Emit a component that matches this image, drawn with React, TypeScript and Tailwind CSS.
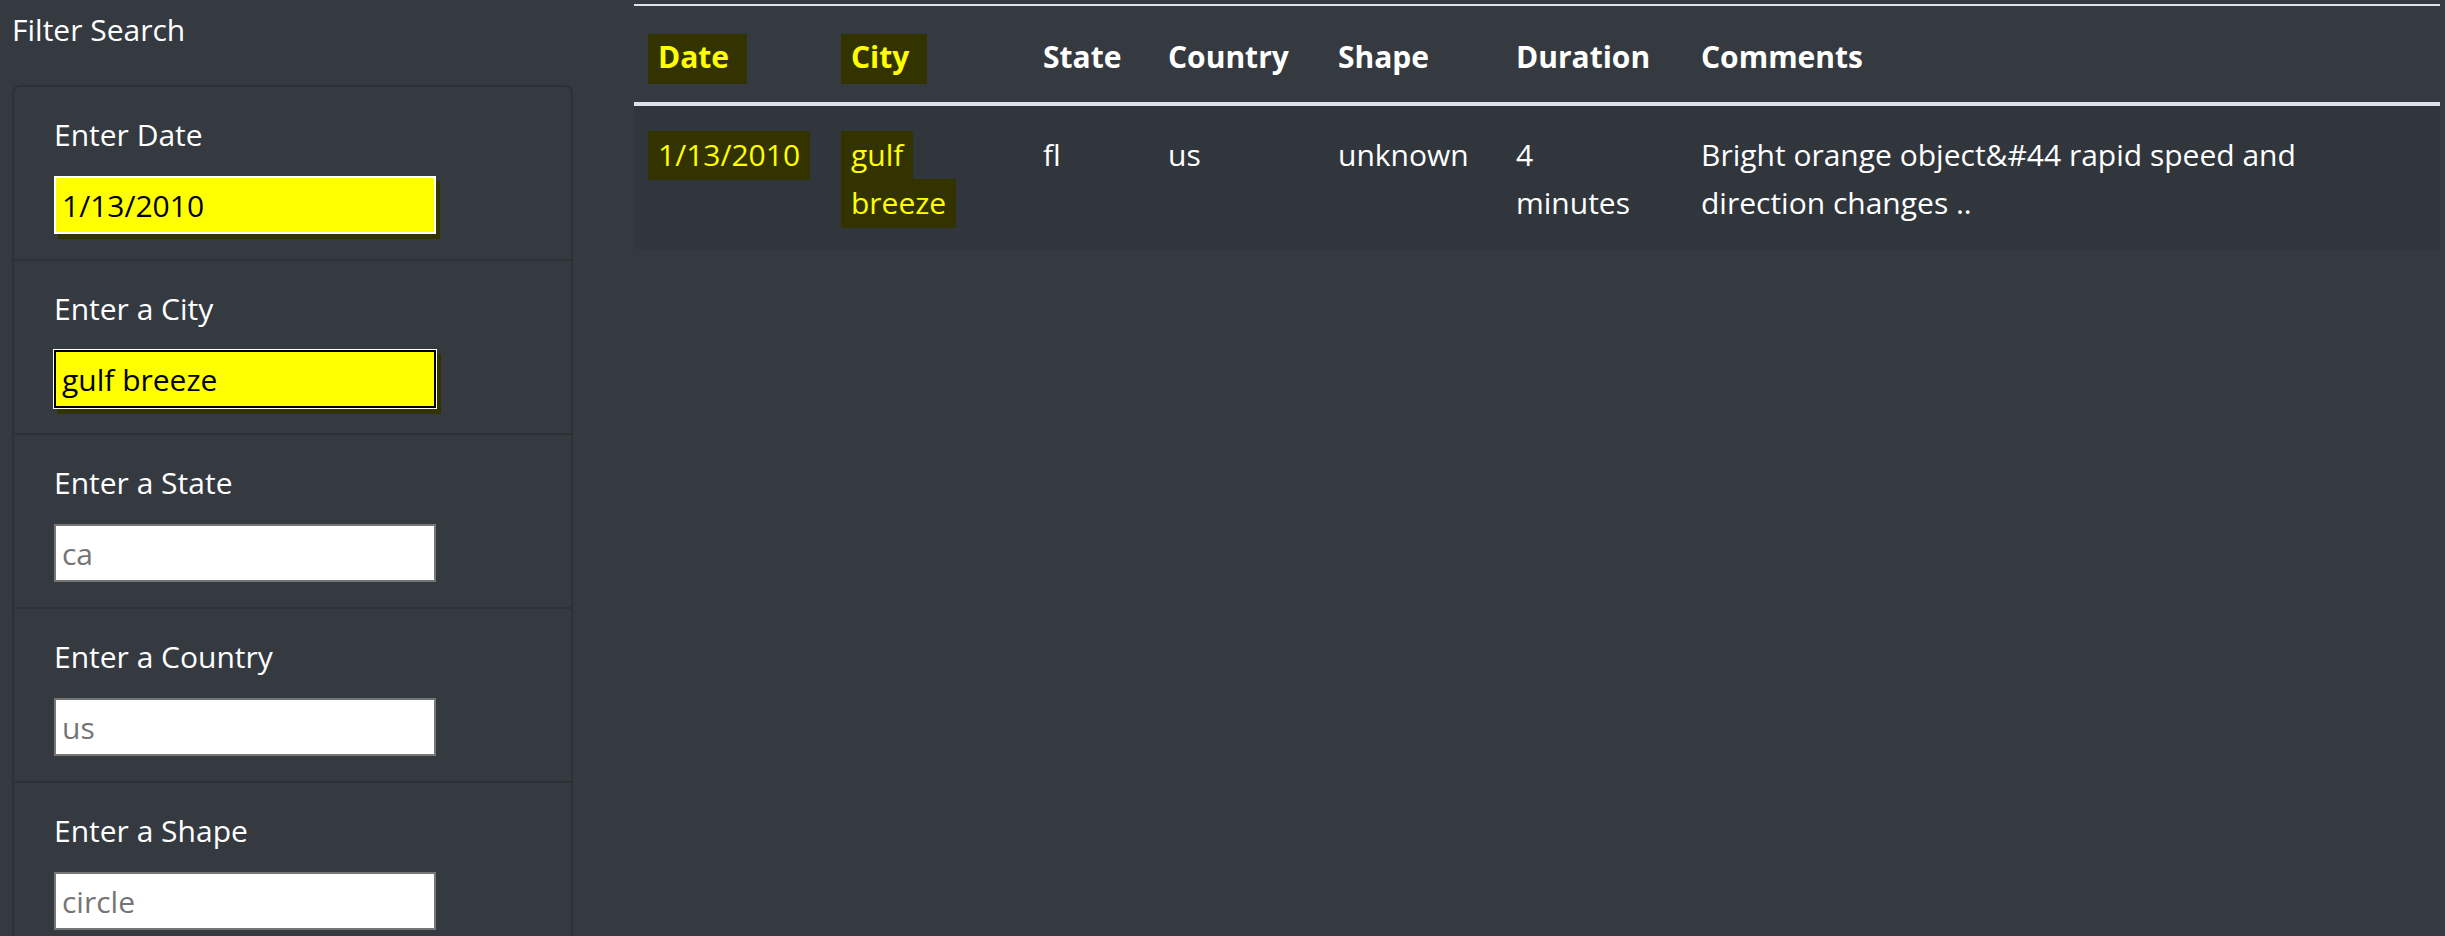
import React from 'react';

type Filter = {
  label: string;
  value?: string;
  placeholder?: string;
  mark?: 'plain' | 'focus';
};

const filters: Filter[] = [
  { label: 'Enter Date', value: '1/13/2010', mark: 'plain' },
  { label: 'Enter a City', value: 'gulf breeze', mark: 'focus' },
  { label: 'Enter a State', placeholder: 'ca' },
  { label: 'Enter a Country', placeholder: 'us' },
  { label: 'Enter a Shape', placeholder: 'circle' },
];

const columns = [
  { name: 'Date', width: 'w-[193px]', marked: true },
  { name: 'City', width: 'w-[192px]', marked: true },
  { name: 'State', width: 'w-[125px]' },
  { name: 'Country', width: 'w-[170px]' },
  { name: 'Shape', width: 'w-[178px]' },
  { name: 'Duration', width: 'w-[185px]' },
  { name: 'Comments', width: 'w-[763px]' },
];

function Mark({ children, wide }: { children: React.ReactNode; wide?: boolean }) {
  return (
    <span
      className={
        wide
          ? 'bg-[#333300] text-[#ffff00] -ml-[10px] pl-[10px] pr-[18px] pt-[2px] pb-[7px] box-decoration-clone'
          : 'bg-[#333300] text-[#ffff00] -mx-[10px] px-[10px] pt-[3px] pb-[5px] box-decoration-clone'
      }
    >
      {children}
    </span>
  );
}

function FilterInput({ filter }: { filter: Filter }) {
  let cls =
    'w-[382px] h-[58px] px-[6px] text-[30px] text-black outline-none placeholder:text-[#757575] bg-white border-2 border-[#767676]';
  if (filter.mark === 'plain') {
    cls =
      'w-[382px] h-[58px] px-[6px] text-[30px] text-black outline-none bg-[#ffff00] border-2 border-white shadow-[4px_5px_0_0_#333300]';
  }
  if (filter.mark === 'focus') {
    cls =
      'w-[382px] h-[58px] px-[6px] text-[30px] text-black outline-none bg-[#ffff00] border-2 border-black shadow-[0_0_0_1px_#ffffff,4px_5px_0_1px_#333300]';
  }
  return (
    <input
      type="text"
      readOnly
      className={cls}
      value={filter.value ?? ''}
      placeholder={filter.placeholder}
    />
  );
}

export default function App() {
  return (
    <div className="h-[936px] w-full overflow-hidden bg-[#353a41] text-white font-['Open_Sans',sans-serif] text-[30px] leading-[48px] flex">
      {/* Sidebar filters */}
      <div className="w-[561px] shrink-0 ml-[12px] pt-[6px]">
        <div className="leading-[48px]">Filter Search</div>
        <div className="mt-[31px] border-2 border-[#2c3136] rounded-[8px]">
          {filters.map((filter, index) => (
            <div
              key={index}
              className="px-[40px] pt-[24px] pb-[25px] border-b-2 border-[#2c3136] last:border-b-0"
            >
              <div className="leading-[48px] mb-[17px]">{filter.label}</div>
              <FilterInput filter={filter} />
            </div>
          ))}
        </div>
      </div>

      {/* Results table */}
      <div className="ml-[61px] pt-[4px] w-[1806px] shrink-0">
        <table className="w-[1806px] table-fixed">
          <colgroup>
            {columns.map((col) => (
              <col key={col.name} className={col.width} />
            ))}
          </colgroup>
          <thead>
            <tr>
              {columns.map((col) => (
                <th
                  key={col.name}
                  className="text-left font-bold px-[24px] pt-[27px] pb-[21px] leading-[48px] border-t-2 border-b-4 border-[#dee2e6]"
                >
                  {col.marked ? <Mark wide>{col.name}</Mark> : col.name}
                </th>
              ))}
            </tr>
          </thead>
          <tbody>
            <tr className="bg-[#31363d]">
              <td className="px-[24px] pt-[25px] pb-[22px] align-top">
                <Mark>1/13/2010</Mark>
              </td>
              <td className="px-[24px] pt-[25px] pb-[22px] align-top">
                <Mark>
                  gulf
                  <br />
                  breeze
                </Mark>
              </td>
              <td className="px-[24px] pt-[25px] pb-[22px] align-top">fl</td>
              <td className="px-[24px] pt-[25px] pb-[22px] align-top">us</td>
              <td className="px-[24px] pt-[25px] pb-[22px] align-top">unknown</td>
              <td className="px-[24px] pt-[25px] pb-[22px] align-top">
                4
                <br />
                minutes
              </td>
              <td className="px-[24px] pt-[25px] pb-[22px] align-top">
                Bright orange object&amp;#44 rapid speed and
                <br />
                direction changes ..
              </td>
            </tr>
          </tbody>
        </table>
      </div>
    </div>
  );
}
